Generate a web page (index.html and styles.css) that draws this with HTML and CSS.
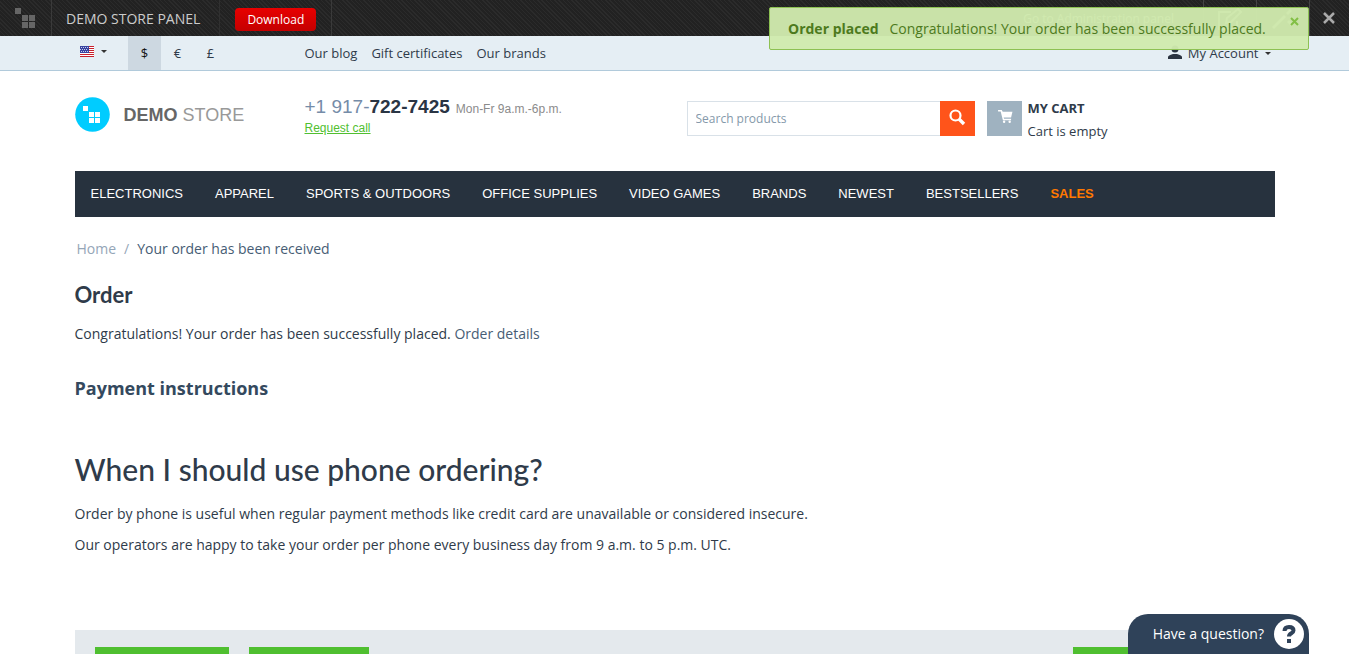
FILE: index.html
```html
<!DOCTYPE html>
<html lang="en">
<head>
<meta charset="utf-8">
<title>Order placed</title>
<link rel="stylesheet" href="styles.css">
</head>
<body>
<div class="panel">
  <a class="panel-logo" href="#" aria-label="Home">
    <svg width="22" height="22" viewBox="0 0 22 22" fill="#666"><path d="M0 0h6v6H0zM7 7h6v6H7zM14 7h6v6h-6zM7 14h6v6H7zM14 14h6v6h-6z"/></svg>
  </a>
  <span class="panel-title">DEMO STORE PANEL</span>
  <div class="panel-download"><a class="download" href="#">Download</a></div>
  <div class="panel-right">
    <a class="admin" href="#">Go to Administration panel</a>
    <a class="panel-icon" href="#" aria-label="Edit"><svg width="26" height="24" viewBox="0 0 26 24" fill="none" stroke="#aaa" stroke-width="2"><path d="M20 13v8H2V4h12M9 15l1-5L21 1l3 3-10 10z"/></svg></a>
    <a class="panel-icon" href="#" aria-label="Theme"><svg width="26" height="24" viewBox="0 0 26 24" stroke="#aaa" stroke-width="3"><path d="M3 20L15 8M17 6l4-4M18 13l4 4"/></svg></a>
    <button class="panel-close" aria-label="Close panel"><svg width="12" height="12" viewBox="0 0 12 12" stroke="#aaa" stroke-width="2.500"><path d="M1 1l10 10M11 1L1 11"/></svg></button>
  </div>
</div>

<div class="topbar">
  <div class="container topbar-row">
    <button class="language" aria-label="Language">
      <svg width="14" height="11" viewBox="0 0 14 11"><path fill="#fff" d="M0 0h14v11H0z"/><path fill="#c8202c" d="M0 0h14v1H0zM0 2h14v1H0zM0 4h14v1H0zM0 6h14v1H0zM0 8h14v1H0zM0 10h14v1H0z"/><path fill="#3944a0" d="M0 0h9v7H0z"/><path stroke="#c9cdf0" stroke-dasharray="1 1" d="M1 1.500h8M0 3.500h8M1 5.500h8"/></svg>
      <span class="caret"></span>
    </button>
    <div class="currencies"><a class="currency current" href="#">$</a><a class="currency" href="#">€</a><a class="currency" href="#">£</a></div>
    <nav class="quick"><a href="#">Our blog</a><a href="#">Gift certificates</a><a href="#">Our brands</a></nav>
    <a class="account" href="#"><svg width="14" height="14" viewBox="0 0 14 14" fill="#2a3340"><circle cx="7" cy="4" r="3.500"/><path d="M0 14v-2q0-1.500 5-3h4q5 1.500 5 3v2z"/></svg><span>My Account</span><span class="caret"></span></a>
  </div>
</div>

<header class="container header">
  <a class="logo" href="#">
    <svg width="35" height="35" viewBox="0 0 35 35"><circle cx="17.500" cy="17.500" r="17.300" fill="#0cf"/><path fill="#fff" d="M8 9h5v5H8zM14 15h5v5h-5zM20 15h5v5h-5zM14 21h5v5h-5zM20 21h5v5h-5z"/></svg>
    <span class="logo-text"><b>DEMO</b> STORE</span>
  </a>
  <div class="phone">
    <div class="phone-line"><span class="number">+1 917-<b>722-7425</b></span><span class="hours">Mon-Fr 9a.m.-6p.m.</span></div>
    <a href="#" class="request">Request call</a>
  </div>
  <form class="search">
    <input type="text" placeholder="Search products" aria-label="Search products">
    <button type="button" aria-label="Search"><svg width="17" height="17" viewBox="0 0 17 17" fill="none" stroke="#fff"><circle cx="6.500" cy="6.500" r="5" stroke-width="2.200"/><path stroke-width="3.300" d="M10 10l5 5"/></svg></button>
  </form>
  <a class="cart" href="#">
    <span class="cart-icon"><svg width="15" height="13" viewBox="0 0 16 14" fill="#fff"><path d="M0 0h4l1 2h10.500l-1.500 6H6l.5 1.500H14V11H5.200L2.800 1.500H0z"/><circle cx="6.500" cy="12.700" r="1.300"/><circle cx="12.500" cy="12.700" r="1.300"/></svg></span>
    <span class="cart-text"><b>MY CART</b><span>Cart is empty</span></span>
  </a>
</header>

<main class="container">
  <nav class="menu">
    <a href="#">ELECTRONICS</a><a href="#">APPAREL</a><a href="#">SPORTS &amp; OUTDOORS</a><a href="#">OFFICE SUPPLIES</a><a href="#">VIDEO GAMES</a><a href="#">BRANDS</a><a href="#">NEWEST</a><a href="#">BESTSELLERS</a><a href="#" class="sales">SALES</a>
  </nav>
  <div class="crumbs"><a href="#">Home</a><span class="slash">/</span><span class="here">Your order has been received</span></div>
  <h1>Order</h1>
  <p class="message">Congratulations! Your order has been successfully placed. <a href="#">Order details</a></p>
  <h3>Payment instructions</h3>
  <h2>When I should use phone ordering?</h2>
  <p>Order by phone is useful when regular payment methods like credit card are unavailable or considered insecure.</p>
  <p>Our operators are happy to take your order per phone every business day from 9 a.m. to 5 p.m. UTC.</p>
  <div class="actions">
    <button class="action first" aria-label="Order details"></button>
    <button class="action second" aria-label="View orders"></button>
    <button class="action last" aria-label="Continue shopping"></button>
  </div>
</main>

<div class="notice" role="alert">
  <b>Order placed</b><span>Congratulations! Your order has been successfully placed.</span>
  <button class="notice-close" aria-label="Close"><svg width="9" height="9" viewBox="0 0 9 9" stroke="#82bf45" stroke-width="2"><path d="M1 1l7 7M8 1L1 8"/></svg></button>
</div>
<button class="question"><span>Have a question?</span>
  <svg width="30" height="30" viewBox="0 0 30 30"><circle cx="15" cy="15" r="15" fill="#fff"/><path fill="none" stroke="#2f4259" stroke-width="4" d="M10.500 12q0-4 4.500-4t4.500 3.500c0 3-4.500 2.500-4.500 6"/><path fill="#2f4259" d="M13 20h4v4h-4z"/></svg>
</button>
</body>
</html>
```
FILE: styles.css
```css
* { box-sizing: border-box; }
html { height: 100%; overflow: hidden; }
body {
  margin: 0;
  height: 100%;
  padding-right: 17px;
  overflow: hidden;
  background: #fff;
  color: #2f3b4a;
  font: 14px/20px "Open Sans", sans-serif;
}
a { color: inherit; text-decoration: none; }
button { border: 0; padding: 0; background: none; font: inherit; color: inherit; }
svg { display: block; flex: none; }
.container { max-width: 1200px; margin: 0 auto; }
.caret { border: 3px solid transparent; border-top-color: #333; border-bottom: 0; }

.panel {
  display: flex;
  height: 36px;
  line-height: 36px;
  color: #ccc;
  background: repeating-linear-gradient(45deg, #2b2b2b 0 1px, #222 1px 3px);
}
.panel-logo { width: 52px; padding: 8px 0 0 15px; border-right: 1px solid #3a3a3a; }
.panel-title { padding: 0 19px 0 14px; border-right: 1px solid #303030; line-height: 38px; }
.panel-download { padding: 8px 15px 0; border-right: 1px solid #3a3a3a; }
.download {
  display: block;
  width: 81px;
  height: 23px;
  border-radius: 4px;
  background: linear-gradient(#e80000, #c40000);
  color: #fff;
  text-align: center;
  font-size: 12px;
  line-height: 23px;
}
.panel-right { display: flex; margin-left: auto; }
.admin { padding: 0 29px 0 15px; line-height: 38px; font-size: 12px; }
.panel-icon { width: 53px; padding: 8px 13px; border-left: 1px solid #444; }
.panel-close { width: 40px; padding: 12px 13px; border-left: 1px solid #444; }

.topbar { border-bottom: 1px solid #b1cadb; background: #e5eef4; font-size: 13px; }
.topbar-row { display: flex; height: 34px; line-height: 34px; }
.language { display: flex; align-items: center; gap: 7px; width: 53px; padding: 0 0 3px 5px; }
.currencies { display: flex; width: 177px; }
.currency { width: 33px; padding-left: 1px; text-align: center; }
.current { background: #cdd8e1; color: #111; }
.quick { display: flex; gap: 14px; }
.account { display: flex; align-items: center; gap: 6px; margin-left: auto; padding-right: 4px; }
.account svg { margin-bottom: 2px; }

.header { display: flex; height: 100px; padding-top: 26px; }
.logo { display: flex; gap: 14px; width: 230px; font: 18px/36px "Liberation Sans", sans-serif; color: #999; }
.logo b { color: #666; }
.phone { width: 382px; font-family: "Liberation Sans", sans-serif; font-size: 12px; line-height: 19px; }
.phone-line { display: flex; align-items: baseline; gap: 6px; line-height: 20px; }
.number { font-size: 19px; color: #758ca8; }
.number b { color: #2a3544; }
.hours { color: #8b8b8b; }
.request { color: #51bf30; text-decoration: underline; }
.search { display: flex; width: 288px; height: 35px; margin: 4px 12px 0 0; }
.search input {
  flex: 1;
  min-width: 0;
  padding: 0 8px;
  border: 1px solid #d9e1e8;
  border-right: 0;
  font: 12px "Open Sans", sans-serif;
}
.search input::placeholder { color: #8599aa; }
.search button { width: 35px; background: #ff541a; padding: 0 0 2px 9px; }
.cart { display: flex; gap: 6px; font-size: 13px; }
.cart-icon { width: 35px; height: 35px; margin-top: 4px; padding: 9px 0 0 11px; background: #9fb2c0; }
.cart-text { display: flex; flex-direction: column; line-height: 23px; }

.menu { display: flex; height: 46px; background: #27323e; color: #fff; font: 13px/46px "Liberation Sans", sans-serif; }
.menu a { padding: 0 16px; }
.menu .sales { color: #ff7800; font-weight: bold; }
.crumbs { display: flex; gap: 8px; padding: 22px 2px 0; color: #95a6b8; }
.here { color: #475d75; }
h1, h2, h3, p { margin: 0; }
h1 { margin-top: 20px; font: bold 22px/32px Lato, sans-serif; }
.message { margin: 13px 0 33px; }
.message a { color: #475d75; }
h3 { margin-bottom: 50px; font-size: 18px; line-height: 22px; color: #34495e; }
h2 { margin-bottom: 15px; font: 500 30px/40px Lato, sans-serif; }
p + p { margin-top: 11px; }
.actions { display: flex; gap: 20px; margin-top: 75px; padding: 17px 20px; background: #e4e9ed; }
.action { height: 36px; background: #4fbf30; }
.first { width: 134px; }
.second { width: 120px; }
.last { width: 182px; margin-left: auto; }

.notice {
  position: absolute;
  top: 7px;
  right: 57px;
  display: flex;
  gap: 11px;
  width: 540px;
  padding: 11px 18px 10px;
  border: 1px solid #8dc153;
  border-radius: 2px;
  background: rgba(208, 234, 174, .96);
  color: #4d7a1d;
}
.notice-close { position: absolute; top: 9px; right: 9px; }
.question {
  position: fixed;
  right: 57px;
  bottom: 0;
  display: flex;
  align-items: center;
  gap: 10px;
  height: 40px;
  padding: 0 5px 0 25px;
  border-radius: 20px 20px 0 0;
  background: #2f4259;
  color: #fff;
}
```
